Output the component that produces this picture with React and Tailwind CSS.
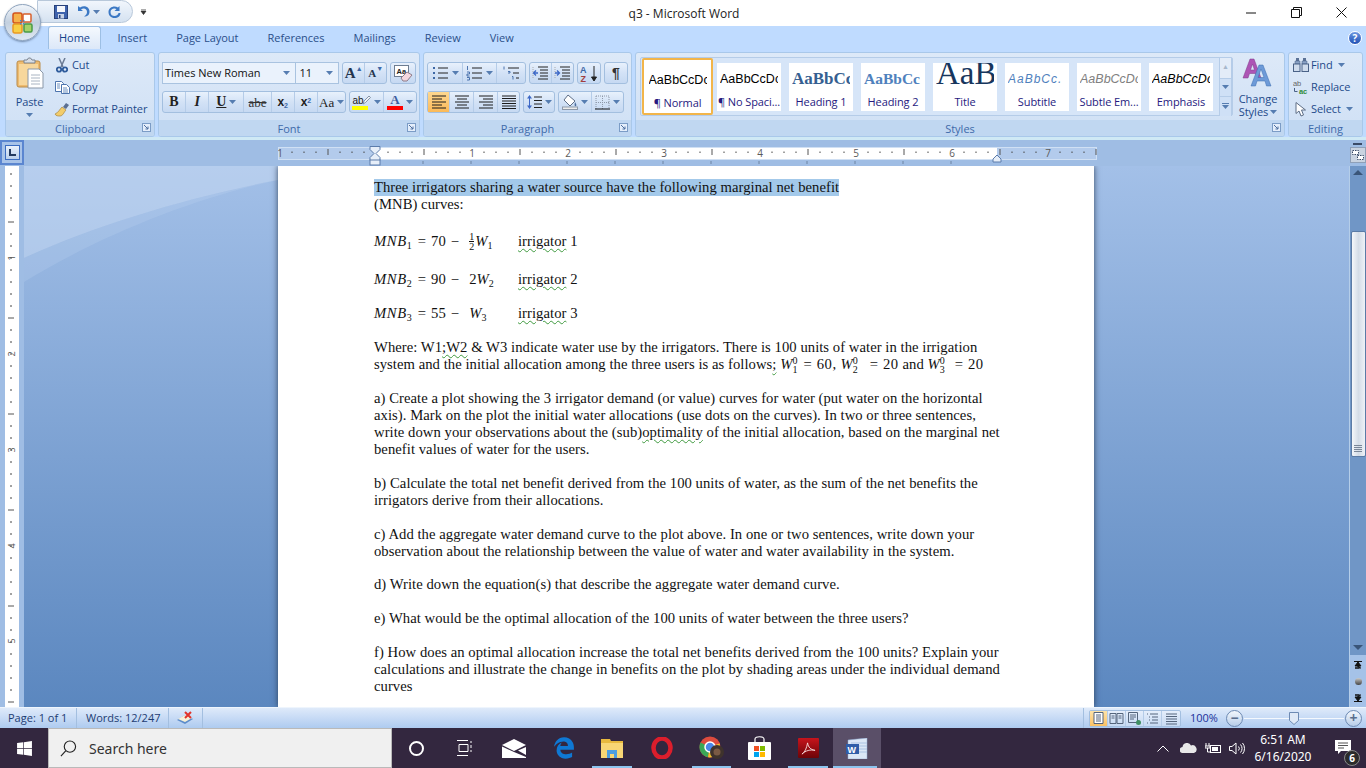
import { FaEdgeLegacy, FaWindows } from 'react-icons/fa';

// ── Ribbon icons ──────────────────────────────────────────────────────────────

function Caret({ className = '' }) {
  return (
    <svg viewBox="0 0 7 4" className={`w-[7px] h-[4px] shrink-0 ${className}`}>
      <path d="M0 0h7L3.5 4z" fill="#567db1" />
    </svg>
  );
}

function Launcher() {
  return (
    <svg viewBox="0 0 9 9" className="w-[9px] h-[9px]">
      <rect x="0.500" y="0.500" width="8" height="8" fill="#e4eefb" stroke="#7b9cc6" />
      <path d="M2 2l4 4M6 3.500V6H3.500" stroke="#4d6f9f" fill="none" />
    </svg>
  );
}

function PasteIcon() {
  return (
    <svg viewBox="0 0 28 32" className="w-[28px] h-[32px]">
      <rect x="1" y="4" width="23" height="26" rx="2" fill="#eebb6f" stroke="#b98b4a" />
      <rect x="3" y="7" width="19" height="21" fill="#f7d79c" />
      <path d="M8 5V3h3l1.500-2h2l1.500 2h3v3H8z" fill="#d8dde4" stroke="#7b8491" />
      <path d="M12 12h11l4 4v15H12z" fill="#fff" stroke="#8a97a8" />
      <path d="M15 18h9M15 21h9M15 24h9M15 27h9" stroke="#a9b4c2" />
    </svg>
  );
}

function ScissorsIcon() {
  return (
    <svg viewBox="0 0 12 15" className="w-[12px] h-[15px]">
      <path d="M3 0l4 9M9 0L5 9" stroke="#6b7b94" strokeWidth="1.500" fill="none" />
      <circle cx="3" cy="11.500" r="2.200" fill="none" stroke="#2f5c9c" strokeWidth="1.800" />
      <circle cx="9" cy="11.500" r="2.200" fill="none" stroke="#2f5c9c" strokeWidth="1.800" />
    </svg>
  );
}

function CopyIcon() {
  return (
    <svg viewBox="0 0 15 13" className="w-[15px] h-[13px]">
      <path d="M0.500 0.500h6l2 2v8h-8z" fill="#fff" stroke="#4d74ad" />
      <path d="M6.500 3.500h5l3 3v6h-8z" fill="#fff" stroke="#4d74ad" />
      <path d="M2 3h3M2 5h3M2 7h3M8 7h4M8 9h5M8 11h5" stroke="#6a8fc0" />
    </svg>
  );
}

function PainterIcon() {
  return (
    <svg viewBox="0 0 16 15" className="w-[16px] h-[15px]">
      <path d="M9 5l3-4 3 2-3 4z" fill="#5a6f92" />
      <path d="M1 12c3-1 5-5 7-7l4 3c-2 2-3 6-6 6-2 0-4 0-5-2z" fill="#f2cc6b" stroke="#a9853b" strokeWidth="0.700" />
    </svg>
  );
}

function ListIcon({ kind }) {
  const marks = {
    bullet: <path d="M1 2h2v2H1zM1 7h2v2H1zM1 12h2v2H1z" fill="#3d68a6" />,
    number: <path d="M1.500 1v4M1 7h2.500v2H1v2h2.500M1 12.500h2.500V15H1" stroke="#3d68a6" fill="none" strokeWidth="0.900" />,
    multi: <path d="M1 1.500v3M5 6.500h2v1.500H5M9 11.500h1v3" stroke="#3d68a6" fill="none" strokeWidth="0.900" />,
  }[kind];
  const lines =
    kind === 'multi' ? (
      <path d="M5 3h11M10 8h6M13 13h3" stroke="#222" />
    ) : (
      <path d="M6 3h10M6 8h10M6 13h10" stroke="#222" />
    );
  return (
    <svg viewBox="0 0 17 16" className="w-[17px] h-[16px]">
      {marks}
      {lines}
    </svg>
  );
}

function IndentIcon({ dir }) {
  return (
    <svg viewBox="0 0 17 14" className="w-[17px] h-[14px]">
      <path d="M6 1h10M8 4h8M8 7h8M8 10h8M6 13h10" stroke="#222" />
      <path d="M1 1v12" stroke="#aaa" strokeDasharray="1 1" />
      {dir === 'left' ? (
        <path d="M6 7H2M4 4.500L1.500 7 4 9.500" stroke="#3d68c6" fill="none" strokeWidth="1.300" />
      ) : (
        <path d="M1 7h4M3 4.500L5.500 7 3 9.500" stroke="#3d68c6" fill="none" strokeWidth="1.300" />
      )}
    </svg>
  );
}

function SortIcon() {
  return (
    <svg viewBox="0 0 18 17" className="w-[18px] h-[17px]">
      <text x="0" y="7.500" fontSize="9" fontWeight="700" fill="#3d68a6" fontFamily="Liberation Sans">A</text>
      <text x="0.500" y="16.500" fontSize="9" fontWeight="700" fill="#a13d3d" fontFamily="Liberation Sans">Z</text>
      <path d="M14 1v14M11.500 12l2.500 4 2.500-4z" stroke="#222" fill="#222" />
    </svg>
  );
}

function AlignIcon({ kind }) {
  const d = {
    left: 'M1 1h14M1 4h10M1 7h14M1 10h10M1 13h14',
    center: 'M1 1h14M3 4h10M1 7h14M3 10h10M1 13h14',
    right: 'M1 1h14M5 4h10M1 7h14M5 10h10M1 13h14',
    justify: 'M1 1h14M1 3.500h14M1 6h14M1 8.500h14M1 11h14M1 13.500h14',
  }[kind];
  return (
    <svg viewBox="0 0 16 14" className="w-[16px] h-[14px]">
      <path d={d} stroke="#1c1c1c" />
    </svg>
  );
}

function LineSpacingIcon() {
  return (
    <svg viewBox="0 0 16 16" className="w-[16px] h-[16px]">
      <path d="M3.500 1L1 4.500h5zM3.500 15L1 11.500h5z" fill="#3d68c6" />
      <path d="M3.500 4v8" stroke="#3d68c6" />
      <path d="M8 3h8M8 6.500h8M8 10h8M8 13.500h8" stroke="#222" />
    </svg>
  );
}

function ShadingIcon() {
  return (
    <svg viewBox="0 0 16 16" className="w-[16px] h-[16px]">
      <path d="M6 1l7 6-5 5-6-6z" fill="#fff" stroke="#5d6d85" />
      <path d="M13 8c1 2 2 3 1 4s-2 0-1-4z" fill="#4d6f9f" />
      <rect x="0.500" y="13" width="15" height="2.500" fill="#ececec" stroke="#8e99a8" />
    </svg>
  );
}

function BorderIcon() {
  return (
    <svg viewBox="0 0 15 15" className="w-[15px] h-[15px]">
      <path d="M1 1h13v13M1 1v13M7.500 1v13M1 7.500h13" stroke="#8d98a8" strokeDasharray="1 1" fill="none" />
      <path d="M0 14h15" stroke="#111" strokeWidth="1.200" />
    </svg>
  );
}

function ClearFormatIcon() {
  return (
    <svg viewBox="0 0 19 17" className="w-[19px] h-[17px]">
      <rect x="0.500" y="0.500" width="14" height="11" fill="#fff" stroke="#6d7d92" />
      <text x="2.500" y="8.500" fontSize="7.500" fontWeight="700" fill="#222" fontFamily="Liberation Sans">Aa</text>
      <path d="M7 13l6-6 5 3-5 6H9z" fill="#f4d8e0" stroke="#8d7d8a" />
    </svg>
  );
}

function HighlightPen() {
  return (
    <svg viewBox="0 0 9 11" className="w-[9px] h-[11px] -ml-[2px]">
      <path d="M1 9l1-3 5-5 1.500 1.500-5 5z" fill="#eef2f8" stroke="#6d7d92" strokeWidth="0.800" />
    </svg>
  );
}

function ChangeStylesIcon() {
  return (
    <svg viewBox="0 0 32 30" className="w-[32px] h-[30px]">
      <path d="M1 20L8 1h4l7 19h-4l-1.500-4.500h-6L6 20zM8.500 12h4L10.500 6z" fill="#ad55b5" stroke="#7e3a88" strokeWidth="0.500" />
      <path d="M9 28L17 7h4l8 21h-4.500L23 23h-8l-1.500 5zM16 19.500h6L19 11z" fill="#6d9ad8" stroke="#3b6cae" strokeWidth="0.500" />
    </svg>
  );
}

function FindIcon() {
  return (
    <svg viewBox="0 0 16 14" className="w-[16px] h-[14px]">
      <path d="M3 0h3v3H3zM10 0h3v3h-3z" fill="#5b7296" />
      <path d="M2 3h5v3H2zM9 3h5v3H9z" fill="#8ba3c6" stroke="#4a6287" strokeWidth="0.500" />
      <rect x="0.500" y="6" width="6.500" height="7.500" fill="#cfdced" stroke="#4a6287" />
      <rect x="9" y="6" width="6.500" height="7.500" fill="#cfdced" stroke="#4a6287" />
    </svg>
  );
}

function ReplaceIcon() {
  return (
    <svg viewBox="0 0 16 14" className="w-[16px] h-[14px]">
      <text x="0" y="6" fontSize="7.500" fill="#666" fontFamily="Liberation Sans">ab</text>
      <text x="6" y="13.500" fontSize="7.500" fontWeight="700" fill="#2e8b3a" fontFamily="Liberation Sans">ac</text>
      <path d="M1.500 8v3.500h3" stroke="#4a6287" fill="none" />
    </svg>
  );
}

function PointerIcon() {
  return (
    <svg viewBox="0 0 12 15" className="w-[12px] h-[15px]">
      <path d="M1 0.500v11l3-2.500 2 5 2.500-1-2-5h4z" fill="#fff" stroke="#5d6d85" />
    </svg>
  );
}

function SaveIcon() {
  return (
    <svg viewBox="0 0 14 14" className="w-[14px] h-[14px]">
      <rect x="0.500" y="0.500" width="13" height="13" fill="#3f63ad" stroke="#27407a" />
      <rect x="3" y="1" width="8" height="6" fill="#f4f6fb" />
      <rect x="4" y="9" width="6" height="4.500" fill="#c7d2e6" />
      <rect x="5" y="10" width="1.500" height="3" fill="#27407a" />
    </svg>
  );
}

function UndoIcon() {
  return (
    <svg viewBox="0 0 13 13" className="w-[13px] h-[13px]">
      <path d="M1 1v5h5L4 4.500C7 2.500 10 4 10 7c0 2-1 3-3 4.500 4 0 5.500-2 5.500-5C12.500 2 7.500-.5 3 2.500z" fill="#3b78c4" />
    </svg>
  );
}

function RedoIcon() {
  return (
    <svg viewBox="0 0 13 13" className="w-[13px] h-[13px]">
      <path d="M11.500 1v5h-5l2-2C6 2.500 2.500 4 2.500 7s2 4 4 4 4-1.500 4-3h2c0 3-2.500 5-6 5S.5 10.500.5 7C.5 2.500 6 0 10 2.500z" fill="#3b78c4" />
    </svg>
  );
}

function OfficeButton() {
  return (
    <div className="absolute z-10 left-[4px] top-[4px] w-[37px] h-[37px] rounded-full border border-[#8ea3bd] bg-gradient-to-b from-[#f2f6fb] via-[#c3d0df] to-[#dfe8f2] flex items-center justify-center shadow-[0_1px_2px_rgba(40,60,90,0.5)]">
      <svg viewBox="0 0 21 22" className="w-[21px] h-[22px]">
        <rect x="1" y="1" width="9" height="10" rx="2" fill="#f6b24a" stroke="#d2541f" strokeWidth="1.500" />
        <rect x="11" y="2" width="8" height="8" rx="1" fill="#fff" stroke="#d8602b" strokeWidth="1.500" />
        <rect x="1" y="12" width="9" height="9" rx="2" fill="#f8cf45" stroke="#ea9a22" strokeWidth="1.500" />
        <rect x="12" y="12" width="8" height="8" rx="1.500" fill="#a5d267" stroke="#4a9a45" strokeWidth="1.500" />
        <path d="M8 8h1.500v1.500H8zM11 8h1.500v1.500H11zM8 11h1.500v1.500H8zM11 11h1.500v1.500H11z" fill="#4a87c8" />
      </svg>
    </div>
  );
}

// ── Ribbon pieces ─────────────────────────────────────────────────────────────

function Group({ width, label, launcher = true, children }) {
  return (
    <div
      className="h-[85px] mr-[3px] flex flex-col rounded-[3px] border border-[#a9c8ea] bg-gradient-to-b from-[#dde9f8] to-[#cfe0f5] overflow-hidden shrink-0"
      style={{ width }}
    >
      <div className="flex-1 min-h-0">{children}</div>
      <div className="h-[16px] bg-[#c0d7f1] flex items-center relative text-[11px] leading-none text-[#3e6aaa]">
        <span className="flex-1 text-center">{label}</span>
        {launcher && (
          <span className="absolute right-[3px] top-[3px] flex">
            <Launcher />
          </span>
        )}
      </div>
    </div>
  );
}

function ButtonStrip({ children }) {
  return (
    <div className="flex items-stretch h-[22px] rounded-[3px] border border-[#a3bfdf] bg-gradient-to-b from-[#e8f1fc] via-[#d3e2f6] to-[#c6d9f2] divide-x divide-[#b5cce8]">
      {children}
    </div>
  );
}

function StripButton({ width, active = false, caret = false, children }) {
  return (
    <div
      className={`flex items-center justify-center gap-[3px] ${active ? 'bg-gradient-to-b from-[#fdd78f] to-[#fbb957]' : ''}`}
      style={{ width }}
    >
      {children}
      {caret && <Caret />}
    </div>
  );
}

function SmallAction({ icon, label, caret = false }) {
  return (
    <div className="h-[22px] flex items-center text-[11px] tracking-[-0.1px] text-[#1e4a8a] whitespace-nowrap">
      <span className="w-[20px] flex justify-center shrink-0">{icon}</span>
      <span>{label}</span>
      {caret && <Caret className="ml-[5px]" />}
    </div>
  );
}

function StyleTile({ label, selected = false, previewClass, preview }) {
  const frame = selected
    ? 'w-[71px] h-[57px] pt-[4px] border-2 border-[#f2b54a] rounded-[2px] shadow-[inset_0_0_0_1px_#fff] mr-[4px]'
    : 'w-[64px] h-[48px] mr-[8px]';
  return (
    <div className={`bg-white flex flex-col items-center overflow-hidden shrink-0 ${frame}`}>
      <div className="h-[33px] w-[58px] shrink-0 flex items-center justify-start overflow-hidden whitespace-nowrap">
        <span className={previewClass}>{preview}</span>
      </div>
      <div className="text-[11px] leading-none tracking-[-0.1px] text-[#261a80] whitespace-nowrap">{label}</div>
    </div>
  );
}

function Ribbon() {
  return (
    <div className="h-[91px] bg-[#bfdbff] pl-[5px] pt-[3px] flex items-start border-b-[3px] border-[#cfe9f5]">
      <Group width={150} label="Clipboard">
        <div className="flex h-full">
          <div className="w-[47px] flex flex-col items-center pt-[4px]">
            <PasteIcon />
            <span className="text-[11px] leading-none mt-[7px] tracking-[-0.1px] text-[#1e4a8a]">Paste</span>
            <Caret className="mt-[6px]" />
          </div>
          <div className="flex flex-col pt-[1px] -ml-[1px]">
            <SmallAction icon={<ScissorsIcon />} label="Cut" />
            <SmallAction icon={<CopyIcon />} label="Copy" />
            <SmallAction icon={<PainterIcon />} label="Format Painter" />
          </div>
        </div>
      </Group>

      <Group width={262} label="Font">
        <div className="px-[3px] pt-[9px] flex flex-col gap-[7px]">
          <div className="flex h-[22px]">
            <div className="w-[136px] flex items-center justify-between pl-[2px] pr-[5px] bg-[#eaf2fc] border border-[#a9c3e0] text-[11px] text-[#111]">
              Times New Roman
              <Caret />
            </div>
            <div className="w-[43px] flex items-center justify-between pl-[3px] pr-[5px] bg-[#eaf2fc] border border-l-0 border-[#a9c3e0] text-[11px] text-[#111]">
              11
              <Caret />
            </div>
            <div className="ml-[3px] w-[45px]">
              <ButtonStrip>
                <StripButton width={23}>
                  <span className="font-['Liberation_Serif',serif] font-bold text-[15px] leading-none text-[#23344e]">A</span>
                  <span className="text-[7px] text-[#3d68a6] -mt-[8px] -ml-[3px]">▲</span>
                </StripButton>
                <StripButton width={21}>
                  <span className="font-['Liberation_Serif',serif] font-bold text-[11px] leading-none text-[#23344e]">A</span>
                  <span className="text-[7px] text-[#3d68a6] -mt-[8px] -ml-[3px]">▼</span>
                </StripButton>
              </ButtonStrip>
            </div>
            <div className="ml-[3px] w-[26px]">
              <ButtonStrip>
                <StripButton width={24}>
                  <ClearFormatIcon />
                </StripButton>
              </ButtonStrip>
            </div>
          </div>
          <div className="flex">
            <div className="w-[184px]">
              <ButtonStrip>
                <StripButton width={23}><span className="font-['Liberation_Serif',serif] font-bold text-[14px] leading-none text-[#222]">B</span></StripButton>
                <StripButton width={24}><span className="font-['Liberation_Serif',serif] italic font-bold text-[14px] leading-none text-[#222]">I</span></StripButton>
                <StripButton width={35} caret><span className="font-['Liberation_Serif',serif] font-bold underline text-[14px] leading-none text-[#222]">U</span></StripButton>
                <StripButton width={28}><span className="font-['Liberation_Serif',serif] line-through text-[13px] leading-none text-[#333]">abe</span></StripButton>
                <StripButton width={23}><span className="font-['Liberation_Sans',sans-serif] font-bold text-[12px] leading-none text-[#222]">x<sub className="text-[7px] text-[#3d68a6]">2</sub></span></StripButton>
                <StripButton width={24}><span className="font-['Liberation_Sans',sans-serif] font-bold text-[12px] leading-none text-[#222]">x<sup className="text-[7px] text-[#3d68a6]">2</sup></span></StripButton>
                <StripButton width={27}>
                  <span className="font-['Liberation_Serif',serif] text-[13px] leading-none text-[#222]">Aa</span>
                  <Caret />
                </StripButton>
              </ButtonStrip>
            </div>
            <div className="ml-[3px] w-[68px]">
              <ButtonStrip>
                <StripButton width={34} caret>
                  <span className="flex flex-col items-start leading-none">
                    <span className="flex items-center font-['Liberation_Sans',sans-serif] text-[10px] leading-[11px] text-[#222]">ab<HighlightPen /></span>
                    <span className="w-[16px] h-[4px] bg-[#ffff00]" />
                  </span>
                </StripButton>
                <StripButton width={32} caret>
                  <span className="flex flex-col items-center leading-none">
                    <span className="font-['Liberation_Serif',serif] font-bold text-[13px] leading-[12px] text-[#3d5ea0]">A</span>
                    <span className="w-[16px] h-[4px] bg-[#ff0000]" />
                  </span>
                </StripButton>
              </ButtonStrip>
            </div>
          </div>
        </div>
      </Group>

      <Group width={209} label="Paragraph">
        <div className="px-[3px] pt-[9px] flex flex-col gap-[7px]">
          <div className="flex gap-[3px]">
            <div className="w-[99px]">
              <ButtonStrip>
                <StripButton width={35} caret><ListIcon kind="bullet" /></StripButton>
                <StripButton width={34} caret><ListIcon kind="number" /></StripButton>
                <StripButton width={28}><ListIcon kind="multi" /></StripButton>
              </ButtonStrip>
            </div>
            <div className="w-[45px]">
              <ButtonStrip>
                <StripButton width={22}><IndentIcon dir="left" /></StripButton>
                <StripButton width={21}><IndentIcon dir="right" /></StripButton>
              </ButtonStrip>
            </div>
            <div className="w-[24px]">
              <ButtonStrip>
                <StripButton width={22}><SortIcon /></StripButton>
              </ButtonStrip>
            </div>
            <div className="w-[24px]">
              <ButtonStrip>
                <StripButton width={22}><span className="font-['Liberation_Sans',sans-serif] font-bold text-[14px] leading-none text-[#333]">¶</span></StripButton>
              </ButtonStrip>
            </div>
          </div>
          <div className="flex gap-[3px]">
            <div className="w-[93px]">
              <ButtonStrip>
                <StripButton width={22} active><AlignIcon kind="left" /></StripButton>
                <StripButton width={24}><AlignIcon kind="center" /></StripButton>
                <StripButton width={24}><AlignIcon kind="right" /></StripButton>
                <StripButton width={21}><AlignIcon kind="justify" /></StripButton>
              </ButtonStrip>
            </div>
            <div className="w-[32px]">
              <ButtonStrip>
                <StripButton width={30} caret><LineSpacingIcon /></StripButton>
              </ButtonStrip>
            </div>
            <div className="w-[66px]">
              <ButtonStrip>
                <StripButton width={33} caret><ShadingIcon /></StripButton>
                <StripButton width={31} caret><BorderIcon /></StripButton>
              </ButtonStrip>
            </div>
          </div>
        </div>
      </Group>

      <Group width={650} label="Styles">
        <div className="flex pl-[4px] pt-[4px]">
          <div className="w-[593px] h-[59px] flex items-center pl-[1px] border border-[#b5cce8] rounded-[2px] bg-[#d6e5f8]">
            <StyleTile selected label="¶ Normal" previewClass="font-['Liberation_Sans',sans-serif] text-[12.500px] text-black" preview="AaBbCcDc" />
            <StyleTile label="¶ No Spaci..." previewClass="font-['Liberation_Sans',sans-serif] text-[12.500px] text-black" preview="AaBbCcDc" />
            <StyleTile label="Heading 1" previewClass="font-['Liberation_Serif',serif] font-bold text-[17px] text-[#365f91]" preview="AaBbCc" />
            <StyleTile label="Heading 2" previewClass="font-['Liberation_Serif',serif] font-bold text-[15.500px] text-[#4f81bd]" preview="AaBbCc" />
            <StyleTile label="Title" previewClass="font-['Liberation_Serif',serif] text-[33px] leading-[33px] -mt-[12px] block text-[#17365d]" preview="AaB" />
            <StyleTile label="Subtitle" previewClass="font-['Liberation_Sans',sans-serif] italic tracking-[1px] text-[12px] text-[#4f81bd]" preview="AaBbCc." />
            <StyleTile label="Subtle Em..." previewClass="font-['Liberation_Sans',sans-serif] italic text-[12.500px] text-[#808080]" preview="AaBbCcDc" />
            <StyleTile label="Emphasis" previewClass="font-['Liberation_Sans',sans-serif] italic text-[12.500px] text-black" preview="AaBbCcDc" />
            <div className="ml-[-2px] w-[14px] h-[58px] flex flex-col border-x border-[#b5cce8]">
              <div className="h-[20px] bg-[#e3ecf8] flex items-center justify-center"><span className="text-[7px] text-[#a7b7cc]">▲</span></div>
              <div className="h-[19px] bg-[#cfe0f6] border-y border-[#b5cce8] flex items-center justify-center"><Caret /></div>
              <div className="h-[19px] bg-[#cfe0f6] flex flex-col items-center justify-center gap-[1px]"><span className="w-[7px] h-[1px] bg-[#567db1]" /><Caret /></div>
            </div>
          </div>
          <div className="w-[50px] flex flex-col items-center pt-[1px] text-[#1e4a8a] text-[11px] leading-[13px]">
            <ChangeStylesIcon />
            <span className="mt-[4px]">Change</span>
            <span className="flex items-center gap-[2px]">Styles <Caret /></span>
          </div>
        </div>
      </Group>

      <Group width={75} label="Editing" launcher={false}>
        <div className="flex flex-col pl-[2px] pt-[1px]">
          <SmallAction icon={<FindIcon />} label="Find" caret />
          <SmallAction icon={<ReplaceIcon />} label="Replace" />
          <SmallAction icon={<PointerIcon />} label="Select" caret />
        </div>
      </Group>
    </div>
  );
}

// ── Title bar and tabs ────────────────────────────────────────────────────────

const TABS = ['Insert', 'Page Layout', 'References', 'Mailings', 'Review', 'View'];

function TitleBar() {
  return (
    <div className="h-[26px] bg-white flex items-center relative">
      <div className="ml-[37px] w-[96px] h-[23px] -mt-[3px] rounded-r-full border border-[#b8c8da] bg-gradient-to-b from-[#f1f6fc] to-[#d5e2f1] flex items-center pl-[16px]">
        <SaveIcon />
        <span className="ml-[9px]"><UndoIcon /></span>
        <Caret className="ml-[3px]" />
        <span className="ml-[8px]"><RedoIcon /></span>
      </div>
      <svg viewBox="0 0 7 6" className="w-[7px] h-[6px] ml-[7px] -mt-[2px]">
        <path d="M1 0h5M1 2h5L3.500 5.500z" stroke="#333" strokeWidth="0.800" fill="#333" />
      </svg>
      <div className="flex-1 flex justify-center text-[12px] text-[#222] pt-[2px]">
        <span className="mr-[25px]">q3 - Microsoft Word</span>
      </div>
      <div className="flex items-center pr-[19px] gap-[34px] -mt-[1px]">
        <svg viewBox="0 0 11 11" className="w-[11px] h-[11px]"><path d="M0 6h10" stroke="#111" /></svg>
        <svg viewBox="0 0 11 11" className="w-[11px] h-[11px]"><path d="M0.500 2.500h8v8h-8zM2.500 2.500v-2h8v8h-2" fill="none" stroke="#111" /></svg>
        <svg viewBox="0 0 11 11" className="w-[11px] h-[11px]"><path d="M0.500 0.500l10 10M10.500 0.500l-10 10" stroke="#111" /></svg>
      </div>
    </div>
  );
}

function TabRow() {
  return (
    <div className="h-[23px] bg-[#bfdbff] flex items-end pl-[48px] text-[11px] text-[#2b4f8a] relative">
      <div className="h-[23px] w-[53px] mr-[2px] pt-[1px] flex items-center justify-center rounded-t-[3px] border border-b-0 border-[#9dbfe4] bg-gradient-to-b from-[#f5f9fe] to-[#dce8f8] text-[#15428b]">
        Home
      </div>
      {TABS.map((t) => (
        <div key={t} className="h-[23px] pt-[1px] flex items-center px-[14.500px] whitespace-nowrap">
          {t}
        </div>
      ))}
      <div className="flex-1" />
      <div className="w-[14px] h-[14px] mr-[4px] mb-[4px] rounded-full bg-gradient-to-b from-[#6d97e0] to-[#1d4eb5] border border-white text-white text-[10px] font-bold leading-[12px] text-center">
        ?
      </div>
    </div>
  );
}

// ── Rulers ────────────────────────────────────────────────────────────────────

function HorizontalRuler() {
  const ticks = [];
  for (let i = 0; i < 69; i++) {
    const x = i * 12 + 2;
    if (i % 8 === 0) continue;
    ticks.push(
      i % 4 === 0 ? (
        <path key={i} d={`M${x} 3v6`} stroke="#555" />
      ) : (
        <path key={i} d={`M${x} 5.500v1.500`} stroke="#444" />
      )
    );
  }
  const nums = [
    [2, '1'],
    [194, '1'],
    [290, '2'],
    [386, '3'],
    [482, '4'],
    [578, '5'],
    [674, '6'],
    [770, '7'],
  ];
  const indents = [];
  for (let x = 146; x < 722; x += 48) indents.push(<path key={x} d={`M${x - 1} 15v3`} stroke="#6d84a3" />);
  return (
    <svg viewBox="0 0 822 20" className="w-[822px] h-[20px] mt-[6px] ml-[254px] shrink-0">
      <rect x="0.500" y="1.500" width="818" height="12" fill="#b3cbec" stroke="#d0e0f4" />
      <rect x="98" y="2" width="621" height="11" fill="#fff" />
      {ticks}
      {indents}
      {nums.map(([x, n], i) => (
        <text key={i} x={x} y="11" fontSize="10" textAnchor="middle" fill="#5a5a5a" fontFamily="Open Sans">
          {n}
        </text>
      ))}
      <path d="M92 0.500h10v3l-4 4 4 4v3H92v-3l4-4-4-4z" fill="#e6eef9" stroke="#5c7cab" />
      <rect x="92" y="14" width="10" height="5" fill="#e6eef9" stroke="#5c7cab" />
      <path d="M715 14v-3l4-4 4 4v3z" fill="#e6eef9" stroke="#5c7cab" transform="translate(0,2)" />
    </svg>
  );
}

function VerticalRuler() {
  const ticks = [];
  for (let i = 0; i < 46; i++) {
    const y = i * 12 + 8;
    const major = (i + 4) % 8 === 0;
    ticks.push(
      major ? (
        <path key={i} d={`M3 ${y}h6`} stroke="#555" />
      ) : (
        <path key={i} d={`M5 ${y}h2`} stroke="#444" />
      )
    );
  }
  const marks = [
    [92, '1'],
    [188, '2'],
    [284, '3'],
    [380, '4'],
    [475, '5'],
  ];
  return (
    <div className="w-[24px] bg-[#9fbde4] pl-[5px] shrink-0">
      <svg viewBox="0 0 14 541" className="w-[14px] h-[541px] bg-white">
        {ticks}
        {marks.map(([y, n]) => (
          <text key={y} x="6" y={y + 4} fontSize="9" textAnchor="middle" fill="#555" fontFamily="Open Sans" transform={`rotate(-90 6 ${y})`}>
            {n}
          </text>
        ))}
      </svg>
    </div>
  );
}

// ── Document text ─────────────────────────────────────────────────────────────

function Squiggle({ children }) {
  return <span className="underline decoration-wavy decoration-[#3f9a3f] decoration-1 underline-offset-2">{children}</span>;
}

function Line({ gap = 0, children }) {
  return (
    <div className="h-[17px] leading-[17px] whitespace-nowrap" style={{ marginTop: gap }}>
      {children}
    </div>
  );
}

function Sub({ children }) {
  return <sub className="text-[10px] not-italic">{children}</sub>;
}

function SupSub({ sub, className }) {
  return (
    <span>
      <i>W</i>
      <span className={`inline-flex flex-col align-middle text-[10px] leading-[9px] -mt-[2px] ${className}`}>
        <span>0</span>
        <span>{sub}</span>
      </span>
    </span>
  );
}

// left part of an equation row: MNB with index, equals sign and constant
function MnbHead({ n, value }) {
  return (
    <>
      <i className="tracking-[0.6px]">MNB</i>
      <Sub>{n}</Sub>
      <span className="ml-[6px]">=</span>
      <span className="ml-[5px]">{value}</span>
      <span className="ml-[5px] mr-[10px]">−</span>
    </>
  );
}

function MathRow({ gap, math, label }) {
  return (
    <div className="h-[17px] leading-[17px] whitespace-nowrap flex" style={{ marginTop: gap }}>
      <span className="w-[144px] shrink-0">{math}</span>
      <Squiggle>irrigator</Squiggle>&nbsp;{label}
    </div>
  );
}

function Page() {
  return (
    <div className="w-[816px] h-[541px] ml-[254px] bg-white pl-[96px] pt-[13px] shadow-[0_0_6px_rgba(40,55,80,0.9)] overflow-hidden relative font-['Liberation_Serif',serif] text-[14.670px] tracking-[0.045px] text-[#111] shrink-0">
      <Line>
        <span className="bg-[#a3c9ea] inline-block h-[17px]">
          Three irrigators sharing a water source have the following marginal net benefit
        </span>
      </Line>
      <Line>(MNB) curves:</Line>

      <MathRow
        gap={20}
        label="1"
        math={
          <>
            <MnbHead n="1" value="70" />
            <span className="inline-flex flex-col align-middle text-[10px] leading-[9px] text-center -mt-[2px] mr-[1px]">
              <span className="border-b border-[#111]">1</span>
              <span>2</span>
            </span>
            <i>W</i><Sub>1</Sub>
          </>
        }
      />
      <MathRow gap={21} label="2" math={<><MnbHead n="2" value="90" />2<i>W</i><Sub>2</Sub></>} />
      <MathRow gap={17} label="3" math={<><MnbHead n="3" value="55" /><i>W</i><Sub>3</Sub></>} />

      <Line gap={17}>Where: W1<Squiggle>;W2</Squiggle> &amp; W3 indicate water use by the irrigators. There is 100 units of water in the irrigation</Line>
      <Line>
        system and the initial allocation among the three users is as follows<Squiggle>;</Squiggle>{' '}
        <SupSub sub="1" className="mr-[6px]" /><span className="tracking-[0.6px]">= 60,</span> <SupSub sub="2" className="mr-[12px]" /><span className="tracking-[0.6px]">= 20</span> and <SupSub sub="3" className="mr-[10px]" /><span className="tracking-[0.6px]">= 20</span>
      </Line>

      <Line gap={17}>a) Create a plot showing the 3 irrigator demand (or value) curves for water (put water on the horizontal</Line>
      <Line>axis). Mark on the plot the initial water allocations (use dots on the curves). In two or three sentences,</Line>
      <Line>write down your observations about the (sub)<Squiggle>optimality</Squiggle> of the initial allocation, based on the marginal net</Line>
      <Line>benefit values of water for the users.</Line>

      <Line gap={17}>b) Calculate the total net benefit derived from the 100 units of water, as the sum of the net benefits the</Line>
      <Line>irrigators derive from their allocations.</Line>

      <Line gap={17}>c) Add the aggregate water demand curve to the plot above. In one or two sentences, write down your</Line>
      <Line>observation about the relationship between the value of water and water availability in the system.</Line>

      <Line gap={16}>d) Write down the equation(s) that describe the aggregate water demand curve.</Line>

      <Line gap={17}>e) What would be the optimal allocation of the 100 units of water between the three users?</Line>

      <Line gap={17}>f) How does an optimal allocation increase the total net benefits derived from the 100 units? Explain your</Line>
      <Line>calculations and illustrate the change in benefits on the plot by shading areas under the individual demand</Line>
      <Line>curves</Line>
    </div>
  );
}

function Scrollbar() {
  return (
    <div className="w-[17px] h-[541px] bg-[#a5c2e8] border-l border-[#b5cee9] flex flex-col items-center shrink-0">
      <div className="w-full h-[489px] bg-[#7096c6] flex flex-col items-center">
        <div className="h-[65px] pt-[4px]">
          <svg viewBox="0 0 10 5" className="w-[10px] h-[5px]"><path d="M0 5l5-5 5 5z" fill="#3a5578" /></svg>
        </div>
        <div className="w-[15px] h-[226px] rounded-[2px] border border-[#5b7ba6] bg-gradient-to-r from-[#f5f7fa] via-[#d4dce7] to-[#eef1f6] flex items-end justify-center pb-[4px]">
          <svg viewBox="0 0 8 7" className="w-[8px] h-[7px]"><path d="M0 0.500h8M0 2.500h8M0 4.500h8M0 6.500h8" stroke="#7a8698" /></svg>
        </div>
        <div className="flex-1" />
        <div className="h-[10px] pb-[8px]">
          <svg viewBox="0 0 10 5" className="w-[10px] h-[5px]"><path d="M0 0l5 5 5-5z" fill="#3a5578" /></svg>
        </div>
      </div>
      <div className="flex flex-col items-center gap-[8px] pt-[6px] text-[9px] leading-[9px] text-[#222]">
        <svg viewBox="0 0 8 8" className="w-[8px] h-[8px]"><path d="M0 0.500h8M4 1L1 5h6zM3 5h2v2H1h6" stroke="#111" fill="#111" /></svg>
        <span className="w-[7px] h-[7px] my-[1px] rounded-full bg-gradient-to-b from-[#ccc] to-[#444]" />
        <svg viewBox="0 0 8 8" className="w-[8px] h-[8px]"><path d="M0 7.500h8M4 7L1 3h6zM3 3h2V1H1h6" stroke="#111" fill="#111" /></svg>
      </div>
    </div>
  );
}

function DocArea() {
  return (
    <div className="flex h-[541px]">
      <VerticalRuler />
      <div className="flex-1 relative overflow-hidden bg-gradient-to-b from-[#a3c0e8] to-[#5b87bf]">
        <svg viewBox="0 0 254 120" className="absolute left-0 top-0 w-[254px] h-[120px]">
          <path d="M0 0h254v14C160 32 70 60 0 92z" fill="#c9dcf3" opacity="0.5" />
          <path d="M0 92C70 60 160 32 254 14C170 32 75 70 0 116z" fill="#c9dcf3" opacity="0.2" />
        </svg>
        <Page />
      </div>
      <Scrollbar />
    </div>
  );
}

// ── Status bar ────────────────────────────────────────────────────────────────

function StatusBar() {
  return (
    <div className="h-[21px] bg-gradient-to-b from-[#dfeafa] to-[#aecbf0] border-t border-[#eef5fd] flex items-center text-[11px] text-[#1d3c72]">
      <div className="h-full w-[77px] pl-[8px] flex items-center border-r border-[#a3bfe0]">Page: 1 of 1</div>
      <div className="h-full w-[92px] pl-[9px] flex items-center border-r border-[#a3bfe0]">Words: 12/247</div>
      <div className="h-full w-[34px] flex items-center justify-center border-r border-[#a3bfe0]">
        <svg viewBox="0 0 17 14" className="w-[17px] h-[14px]">
          <path d="M0 9l8-5 8 4-8 5z" fill="#5d8dcb" />
          <path d="M1 8l7-4 7 3-7 4z" fill="#f7f1d8" />
          <path d="M8 1l6 6M14 1L8 7" stroke="#e1352b" strokeWidth="2" />
        </svg>
      </div>
      <div className="flex-1" />
      <div className="h-full border-l border-[#a3bfe0] pl-[5px] flex items-center">
        <div className="flex h-[17px] rounded-[2px] border border-[#a3bfe0] bg-gradient-to-b from-[#e5eefb] to-[#c7daf3] divide-x divide-[#b5cce8]">
          <ViewBtn active kind="page" />
          <ViewBtn kind="book" />
          <ViewBtn kind="web" />
          <ViewBtn kind="outline" />
          <ViewBtn kind="draft" />
        </div>
      </div>
      <span className="w-[36px] ml-[9px] text-[#20309a] text-[11px]">100%</span>
      <ZoomBtn>−</ZoomBtn>
      <div className="w-[100px] h-[1px] bg-[#f4f8fd] mx-[1px] flex items-center justify-center relative">
        <svg viewBox="0 0 10 13" className="w-[10px] h-[13px] absolute left-[45px] -top-[6px]">
          <path d="M0.500 0.500h9v8L5 12.500 0.500 8.500z" fill="#dfe9f6" stroke="#6d8ab3" />
        </svg>
      </div>
      <ZoomBtn>+</ZoomBtn>
      <div className="w-[4px]" />
    </div>
  );
}

function ViewBtn({ active = false, kind }) {
  const d = {
    page: 'M3 1.500h9v11H3zM5 4h5M5 6h5M5 8h5M5 10h5',
    book: 'M1 2.500h6v10H1zM8 2.500h6v10H8zM2.500 5h3M2.500 7h3M9.500 5h3M9.500 7h3',
    web: 'M1.500 1.500h9v10h-9zM3 4h6M3 6h6M3 8h4',
    outline: 'M2 3h1M5 3h8M4 6h1M7 6h6M4 9h1M7 9h6M2 12h1M5 12h8',
    draft: 'M2 3h11M2 5.500h11M2 8h11M2 10.500h11M2 13h11',
  }[kind];
  return (
    <div className={`w-[18px] flex items-center justify-center ${active ? 'bg-gradient-to-b from-[#fde3a8] to-[#fbc162]' : ''}`}>
      <svg viewBox="0 0 15 15" className="w-[15px] h-[15px]">
        <path d={d} stroke="#55657c" fill={kind === 'page' ? '#fff' : 'none'} />
        {kind === 'web' && <circle cx="11.500" cy="11.500" r="2.500" fill="#3f8f63" />}
      </svg>
    </div>
  );
}

function ZoomBtn({ children }) {
  return (
    <div className="w-[17px] h-[17px] rounded-full border border-[#6d8ab3] bg-gradient-to-b from-[#f3f7fc] to-[#b7cde9] flex items-center justify-center text-[14px] font-bold leading-none text-[#5a6f8e]">
      {children}
    </div>
  );
}

// ── Windows taskbar ───────────────────────────────────────────────────────────

function TaskIcon({ width = 48, active = false, running = false, children }) {
  return (
    <div
      className={`h-full flex items-center justify-center relative shrink-0 ${active ? 'bg-[#5a4f68]' : ''}`}
      style={{ width }}
    >
      {children}
      {running && <span className={`absolute bottom-0 h-[2px] bg-[#8cc4ee] ${active ? 'left-0 right-[4px]' : 'left-[5px] right-[5px]'}`} />}
    </div>
  );
}

function Taskbar() {
  return (
    <div className="h-[40px] bg-[#33273f] flex items-stretch text-white">
      <div className="w-[48px] flex items-center justify-center">
        <FaWindows className="w-[17px] h-[17px] text-white" />
      </div>
      <div className="w-[344px] bg-[#f0f0f0] border border-[#b9b9b9] flex items-center pl-[11px] text-[#333] text-[14px] font-['Noto_Sans',sans-serif]">
        <svg viewBox="0 0 18 18" className="w-[17px] h-[17px]">
          <circle cx="10.500" cy="7" r="6" fill="none" stroke="#222" strokeWidth="1.200" />
          <path d="M6 11.500L1 17" stroke="#222" strokeWidth="1.200" />
        </svg>
        <span className="ml-[12px]">Search here</span>
      </div>
      <TaskIcon>
        <span className="w-[15px] h-[15px] rounded-full border-2 border-white" />
      </TaskIcon>
      <TaskIcon>
        <svg viewBox="0 0 17 16" className="w-[17px] h-[16px]">
          <path d="M1 0.500h11M3 4.500h9v7H3zM1 15.500h11M15 1v2M15 5v3M15 10v2" stroke="#fff" fill="none" />
        </svg>
      </TaskIcon>
      <TaskIcon width={52}>
        <svg viewBox="0 0 24 19" className="w-[24px] h-[19px]">
          <path d="M0 6l12-6 12 6-12 6z" fill="#fff" />
          <path d="M0 7.500V19h24v-1L12 13zM24 8v8l-8-4.500z" fill="#fff" />
        </svg>
      </TaskIcon>
      <TaskIcon width={47}>
        <FaEdgeLegacy className="w-[22px] h-[22px] text-[#0f78d4]" />
      </TaskIcon>
      <TaskIcon width={50} running>
        <svg viewBox="0 0 22 19" className="w-[22px] h-[19px]">
          <path d="M0 0h9l1 2h12v17H0z" fill="#e8b93e" />
          <rect x="0" y="4" width="22" height="15" fill="#f8d675" />
          <path d="M6 19v-8h10v8h-3v-4H9v4z" fill="#4d9ee0" />
        </svg>
      </TaskIcon>
      <TaskIcon width={50}>
        <svg viewBox="0 0 22 22" className="w-[22px] h-[22px]">
          <ellipse cx="11" cy="11" rx="8.500" ry="9.500" fill="none" stroke="#dc1e2c" strokeWidth="4.500" />
        </svg>
      </TaskIcon>
      <TaskIcon width={49} running>
        <svg viewBox="0 0 26 24" className="w-[26px] h-[24px]">
          <circle cx="11" cy="11" r="10.500" fill="#dd4b3e" />
          <path d="M11 11L1.500 6.500A10.500 10.500 0 0 0 9 21.300z" fill="#3aa757" />
          <path d="M11 11l9.500-3.500A10.500 10.500 0 0 1 9 21.300z" fill="#f5c32c" />
          <circle cx="11" cy="11" r="5" fill="#4a87e8" stroke="#fff" strokeWidth="1.500" />
          <circle cx="18" cy="16" r="7" fill="#3f332c" />
          <circle cx="18" cy="16" r="3.500" fill="#7a5a44" />
        </svg>
      </TaskIcon>
      <TaskIcon width={47}>
        <svg viewBox="0 0 23 24" className="w-[23px] h-[24px]">
          <path d="M7 7V3c0-3 9-3 9 0v4" fill="none" stroke="#fff" strokeWidth="1.200" />
          <rect x="0" y="6" width="23" height="18" rx="1" fill="#fff" />
          <rect x="6" y="10" width="5" height="5" fill="#f25022" />
          <rect x="12" y="10" width="5" height="5" fill="#7fba00" />
          <rect x="6" y="16" width="5" height="5" fill="#00a4ef" />
          <rect x="12" y="16" width="5" height="5" fill="#ffb900" />
        </svg>
      </TaskIcon>
      <TaskIcon width={50} running>
        <div className="w-[21px] h-[20px] bg-gradient-to-b from-[#c8141c] to-[#6d0508] rounded-[1px] flex items-center justify-center">
          <svg viewBox="0 0 16 16" className="w-[15px] h-[15px]">
            <path d="M1 14c3-2 5-6 6-12 1 5 3 7 8 8-5-1-10 0-14 4z" fill="none" stroke="#f6d9d9" strokeWidth="1" />
          </svg>
        </div>
      </TaskIcon>
      <TaskIcon width={48} active running>
        <svg viewBox="0 0 23 21" className="w-[23px] h-[21px]">
          <path d="M2 2l19-2v21H2z" fill="#dbe7f6" stroke="#8eabd2" strokeWidth="0.500" />
          <path d="M5 5h16M5 8h16M5 11h16M5 14h16" stroke="#aac3e3" />
          <rect x="0" y="6" width="13" height="10" fill="#2f5da8" />
          <text x="1.500" y="14.500" fontSize="9" fontWeight="700" fill="#fff" fontFamily="Liberation Sans">W</text>
        </svg>
      </TaskIcon>
      <div className="flex-1" />
      <div className="flex items-center text-white">
        <svg viewBox="0 0 12 7" className="w-[12px] h-[7px] mr-[11px]"><path d="M0.500 6.500L6 1l5.500 5.500" stroke="#fff" fill="none" /></svg>
        <svg viewBox="0 0 17 10" className="w-[17px] h-[10px] mr-[8px]"><path d="M3 10a3 3 0 0 1-.5-6A4.500 4.500 0 0 1 11 2.500 3.800 3.800 0 0 1 14 10z" fill="#e8e8e8" /></svg>
        <svg viewBox="0 0 16 11" className="w-[16px] h-[11px] mr-[8px]">
          <path d="M1 0v3M4 0v3M0 3h5v2H0zM2.500 5v4h3" stroke="#fff" fill="none" />
          <rect x="5.500" y="2.500" width="10" height="7" stroke="#fff" fill="none" />
          <rect x="7" y="4" width="6" height="4" fill="#fff" />
        </svg>
        <svg viewBox="0 0 16 13" className="w-[16px] h-[13px] mr-[5px]">
          <path d="M0.500 4.500H3L7 1v11L3 8.500H0.500zM9.500 4.500a3 3 0 0 1 0 4M11.500 2.500a6 6 0 0 1 0 8M13.500 1a8.500 8.500 0 0 1 0 11" stroke="#fff" fill="none" />
        </svg>
        <div className="w-[66px] flex flex-col items-center text-[12px] leading-[17px] font-['Noto_Sans',sans-serif]">
          <span>6:51 AM</span>
          <span>6/16/2020</span>
        </div>
        <div className="w-[44px] ml-[6px] flex justify-center relative">
          <svg viewBox="0 0 16 15" className="w-[16px] h-[15px] -mt-[2px] -ml-[3px]">
            <path d="M0 0h16v11H6l-3 3v-3H0z" fill="#fff" />
            <path d="M3 3h10M3 5.500h10M3 8h6" stroke="#555" />
          </svg>
          <span className="absolute left-[22px] top-[8px] w-[16px] h-[16px] rounded-full bg-[#2b2b2b] border border-[#888] text-[10px] font-bold leading-[14px] text-center">6</span>
        </div>
      </div>
    </div>
  );
}

// ── Main component ────────────────────────────────────────────────────────────

export default function App() {
  return (
    <div className="w-[1366px] h-[768px] overflow-hidden relative font-['Open_Sans','Noto_Sans',sans-serif] bg-[#9fbde4]">
      <OfficeButton />
      <TitleBar />
      <TabRow />
      <Ribbon />
      <div className="h-[26px] bg-[#9fbde4] flex relative">
        <div className="absolute left-0 top-0 w-[24px] h-[25px] border-2 border-[#5b86d0] bg-[#a8c3e8] flex items-center justify-center">
          <span className="w-[15px] h-[15px] border border-[#3b6cc0] bg-gradient-to-b from-[#eaf1fb] to-[#b9cfec] flex items-center justify-center">
            <svg viewBox="0 0 7 7" className="w-[7px] h-[7px]"><path d="M0 0h2v5h5v2H0z" fill="#22395f" /></svg>
          </span>
        </div>
        <div className="ml-[24px]">
          <HorizontalRuler />
        </div>
        <div className="absolute right-0 top-0 w-[17px] h-[26px] flex flex-col items-center">
          <span className="w-[9px] h-[2px] bg-[#3a4a66] mt-[3px]" />
          <span className="w-[16px] h-[16px] mt-[2px] bg-[#c9d3e0] border border-[#8fa0b8] flex items-center justify-center">
            <svg viewBox="0 0 12 12" className="w-[12px] h-[12px]"><path d="M0.500 1.500h6v4h-6zM5.500 6.500h6v4h-6z" fill="#fff" stroke="#3a4a66" strokeDasharray="1.500 1" /></svg>
          </span>
        </div>
      </div>
      <DocArea />
      <StatusBar />
      <Taskbar />
    </div>
  );
}
